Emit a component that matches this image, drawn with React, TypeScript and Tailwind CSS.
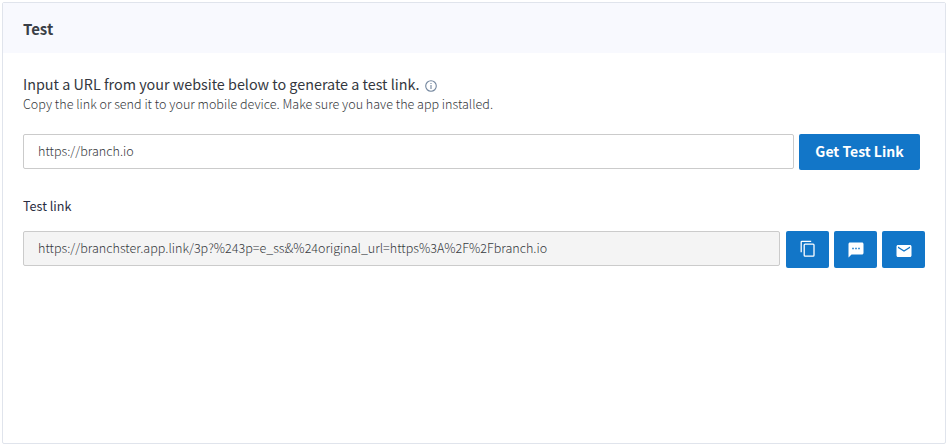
import React from 'react';

function InfoIcon() {
  return (
    <svg width="12" height="12" viewBox="0 0 12 12" fill="none" stroke="#74879f" strokeWidth="1.1">
      <circle cx="6" cy="6" r="5.3" />
      <path d="M6 5v4M6 2.9v1.2" />
    </svg>
  );
}

function CopyIcon() {
  return (
    <svg width="16" height="18" viewBox="0 0 16 18" fill="none" stroke="#fff" strokeWidth="1.3">
      <path d="M1.2 12.2V2.1a.8.8 0 0 1 .8-.8h9.2" />
      <rect x="4.2" y="4.2" width="9.8" height="11.9" rx="0.9" />
    </svg>
  );
}

function SmsIcon() {
  return (
    <svg width="18" height="18" viewBox="0 0 24 24" fill="#fff">
      <path d="M20 2H4c-1.1 0-1.99.9-1.99 2L2 22l4-4h14c1.1 0 2-.9 2-2V4c0-1.1-.9-2-2-2zM9 11H7V9h2v2zm4 0h-2V9h2v2zm4 0h-2V9h2v2z" />
    </svg>
  );
}

function MailIcon() {
  return (
    <svg width="18" height="18" viewBox="0 0 24 24" fill="#fff">
      <path d="M20 4H4c-1.1 0-1.99.9-1.99 2L2 18c0 1.1.9 2 2 2h16c1.1 0 2-.9 2-2V6c0-1.1-.9-2-2-2zm0 4l-8 5-8-5V6l8 5 8-5v2z" />
    </svg>
  );
}

function IconButton({ label, pad, children }: { label: string; pad: string; children: React.ReactNode }) {
  return (
    <button aria-label={label} className={`flex h-[37px] w-[43px] justify-center rounded-[2px] bg-[#1276c8] ${pad}`}>
      {children}
    </button>
  );
}

export default function App() {
  return (
    <div className="h-[446px] bg-white pt-0.5 pl-0.5 font-['Noto_Sans_CJK_SC','Noto_Sans',sans-serif] text-[#36393d]">
      <section className="h-[442px] w-[944px] rounded-[2px] border border-[#e0e4ec]">
        <header className="flex h-[50px] items-center bg-[#f8f9fe] pt-px pl-5">
          <h2 className="text-[15px] leading-5 font-bold text-[#3a3f47]"><span>Test</span></h2>
        </header>
        <div className="pt-[21px] pl-5">
          <div className="flex h-[21px] items-start gap-[5px] text-[14.35px] leading-5 text-[#33373e]">
            <span>Input a URL from your website below to generate a test link.</span>
            <span className="pt-1.5"><InfoIcon /></span>
          </div>
          <p className="h-[18px] text-[12.56px] leading-[18px] font-light"><span>Copy the link or send it to your mobile device. Make sure you have the app installed.</span></p>
          <div className="mt-[21px] flex items-start gap-[5px]">
            <div className="flex h-[35px] w-[771px] items-start rounded-[2px] border border-[#cbcbcb] pt-[7px] pl-3.5 text-[12.56px] leading-[18px] font-light">
              <span>https://branch.io</span>
            </div>
            <button className="flex h-9 w-[121px] items-center justify-center rounded-[2px] bg-[#1276c8] pb-px text-[14px] font-bold text-white">
              <span>Get Test Link</span>
            </button>
          </div>
          <div className="mt-[26px] h-5 text-[12.6px] leading-5 text-[#292d42]"><span>Test link</span></div>
          <div className="mt-[15px] flex items-start gap-[6px]">
            <div className="flex h-[35px] w-[757px] items-start rounded-[2px] border border-[#cbcbcb] bg-[#f4f4f4] pt-[7px] pl-3.5 text-[12.56px] leading-[18px] font-light">
              <span>https://branchster.app.link/3p?%243p=e_s<span className="tracking-[-0.6px]">s</span><span className="tracking-[-1.8px]">:</span>&amp;%24original_url=https%3A%2F%2Fbranch.io</span>
            </div>
            <div className="flex gap-[5px]">
              <IconButton label="Copy link" pad="pt-[9px]"><CopyIcon /></IconButton>
              <IconButton label="Send by text message" pad="pt-2.5"><SmsIcon /></IconButton>
              <IconButton label="Send by email" pad="pt-[11px]"><MailIcon /></IconButton>
            </div>
          </div>
        </div>
      </section>
    </div>
  );
}
